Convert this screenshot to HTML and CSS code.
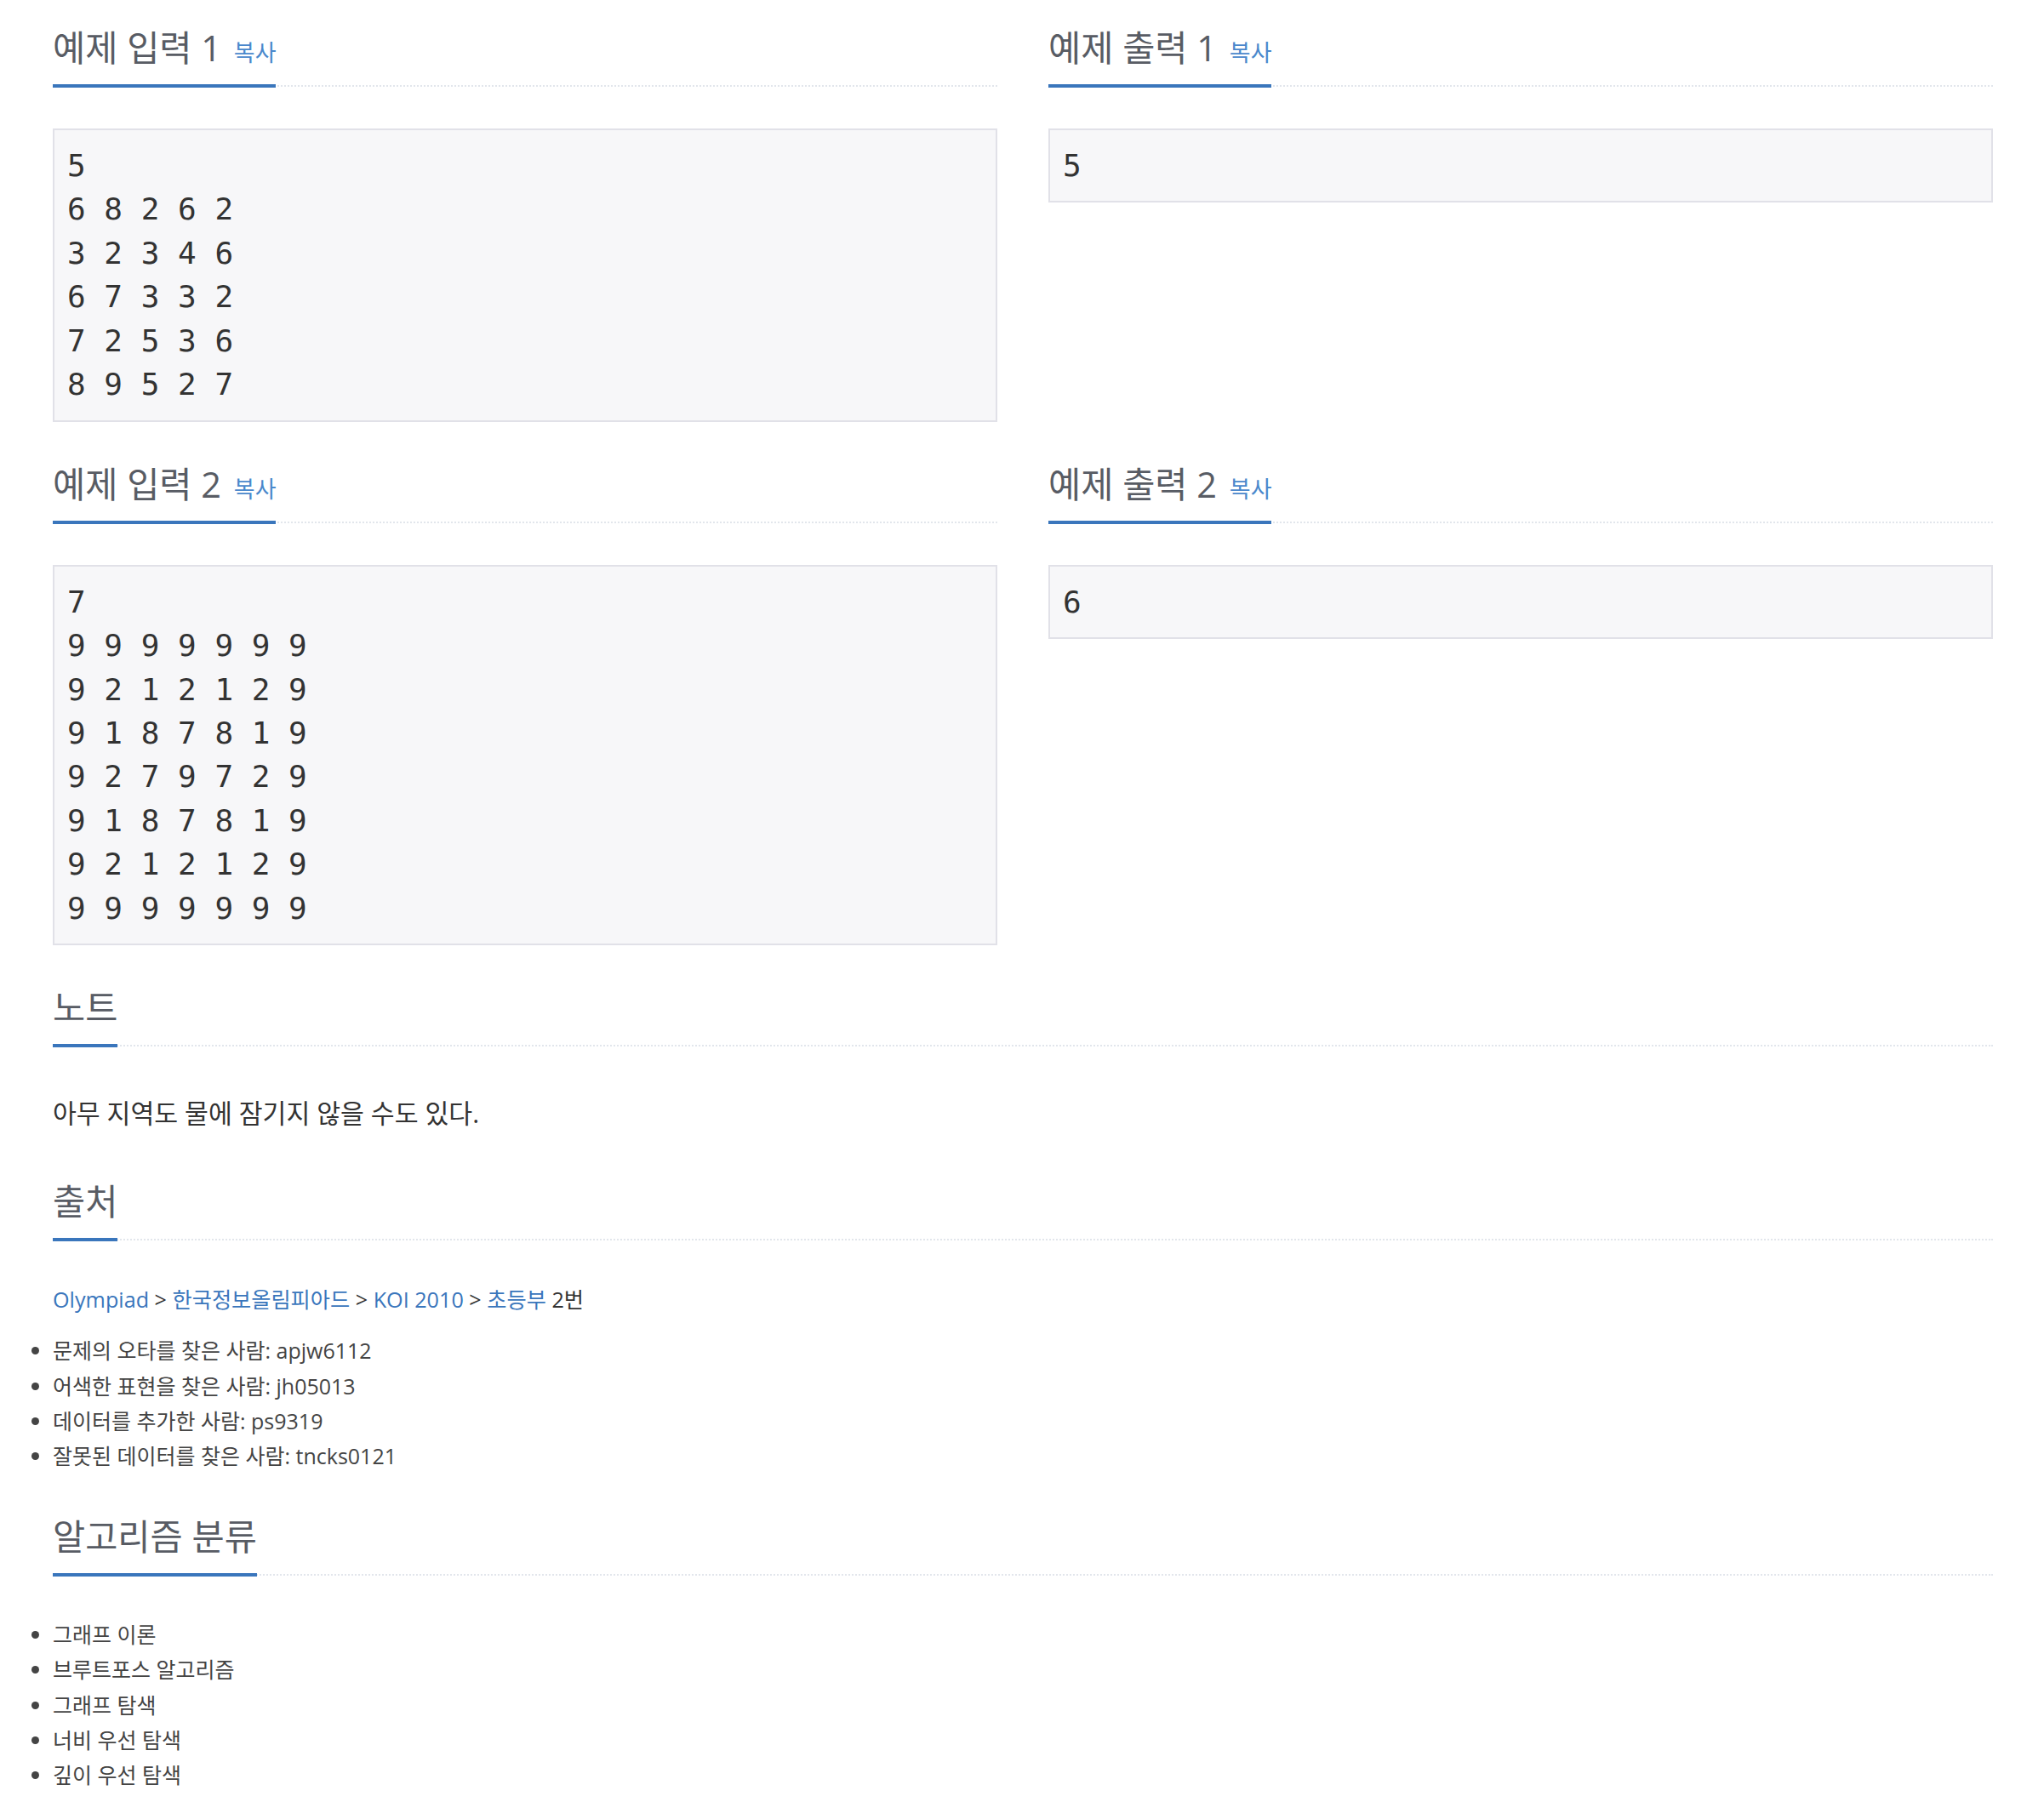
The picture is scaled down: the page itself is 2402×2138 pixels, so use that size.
FILE: index.html
```html
<!DOCTYPE html>
<html lang="ko">
<head>
<meta charset="utf-8">
<title>예제</title>
<link rel="stylesheet" href="styles.css">
</head>
<body>
<div class="page">
  <div class="samples">
    <section class="section">
      <div class="headline"><h2>예제 입력 1 <button class="copy" type="button">복사</button></h2></div>
      <pre class="sampledata">5
6 8 2 6 2
3 2 3 4 6
6 7 3 3 2
7 2 5 3 6
8 9 5 2 7</pre>
    </section>
    <section class="section">
      <div class="headline"><h2>예제 출력 1 <button class="copy" type="button">복사</button></h2></div>
      <pre class="sampledata">5</pre>
    </section>
    <section class="section">
      <div class="headline"><h2>예제 입력 2 <button class="copy" type="button">복사</button></h2></div>
      <pre class="sampledata">7
9 9 9 9 9 9 9
9 2 1 2 1 2 9
9 1 8 7 8 1 9
9 2 7 9 7 2 9
9 1 8 7 8 1 9
9 2 1 2 1 2 9
9 9 9 9 9 9 9</pre>
    </section>
    <section class="section">
      <div class="headline"><h2>예제 출력 2 <button class="copy" type="button">복사</button></h2></div>
      <pre class="sampledata">6</pre>
    </section>
  </div>

  <section class="section">
    <div class="headline"><h2>노트</h2></div>
    <p class="note">아무 지역도 물에 잠기지 않을 수도 있다.</p>
  </section>

  <section class="section">
    <div class="headline"><h2>출처</h2></div>
    <p class="source"><a href="#">Olympiad</a> &gt; <a href="#">한국정보올림피아드</a> &gt; <a href="#">KOI 2010</a> &gt; <a href="#">초등부</a> 2번</p>
    <ul class="list">
      <li>문제의 오타를 찾은 사람: apjw6112</li>
      <li>어색한 표현을 찾은 사람: jh05013</li>
      <li>데이터를 추가한 사람: ps9319</li>
      <li>잘못된 데이터를 찾은 사람: tncks0121</li>
    </ul>
  </section>

  <section class="section">
    <div class="headline"><h2>알고리즘 분류</h2></div>
    <ul class="list">
      <li>그래프 이론</li>
      <li>브루트포스 알고리즘</li>
      <li>그래프 탐색</li>
      <li>너비 우선 탐색</li>
      <li>깊이 우선 탐색</li>
    </ul>
  </section>
</div>
</body>
</html>
```

FILE: styles.css
```css
* {
  box-sizing: border-box;
}

body {
  margin: 0;
  background: #ffffff;
  font-family: "Open Sans", "Noto Sans CJK KR", sans-serif;
  color: #333333;
}

.page {
  padding: 33px 60px 40px 62px;
}

.samples {
  display: grid;
  grid-template-columns: 1fr 1fr;
  column-gap: 60px;
}

.section {
  display: flow-root;
  margin-bottom: 30px;
}

.headline {
  display: flex;
  align-items: flex-start;
  border-bottom: 2px dotted #e2e6ec;
  margin-bottom: 49px;
}

.headline h2 {
  margin: 0 0 -3px;
  padding-bottom: 19px;
  font-size: 41.5px;
  line-height: 47px;
  font-weight: 400;
  color: #585c64;
  border-bottom: 4px solid #3a76bc;
  white-space: nowrap;
}

.copy {
  margin: 0 0 0 4px;
  padding: 0;
  border: 0;
  background: none;
  font-family: "Open Sans", "Noto Sans CJK KR", sans-serif;
  font-size: 27px;
  line-height: 27px;
  color: #4a88cc;
  cursor: pointer;
}

.sampledata {
  margin: 0 0 20px;
  padding: 16px 15px;
  background: #f7f7f9;
  border: 2px solid #e1e1e8;
  font-family: "DejaVu Sans Mono", "Liberation Mono", monospace;
  font-size: 36px;
  line-height: 51.43px;
  color: #333333;
  white-space: pre;
}

.note {
  margin: 0 0 20px;
  font-size: 30.3px;
  line-height: 60px;
  color: #333333;
}

.source {
  margin: 0 0 20px;
  font-size: 25.2px;
  line-height: 40px;
  color: #333333;
}

.source a {
  color: #3a76bc;
  text-decoration: none;
}

.list {
  margin: 0 0 20px;
  padding: 0;
}

.list li {
  font-size: 25px;
  line-height: 41.4px;
  color: #444444;
}
```
